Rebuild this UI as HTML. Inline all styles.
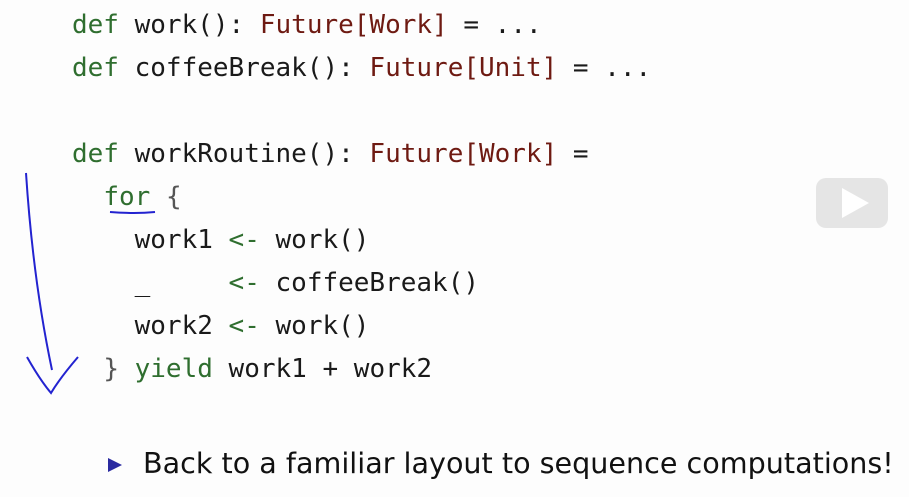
<!DOCTYPE html>
<html><head><style>
body{margin:0;width:909px;height:497px;background:#fdfdfd;overflow:hidden;position:relative;font-family:"DejaVu Sans Mono","Liberation Mono",monospace;}
.c{position:absolute;left:72px;top:4px;font-size:26px;line-height:43px;white-space:pre;color:#1a1a1a;}
.k{color:#2f6e2f}.t{color:#6e1a12}.g{color:#555}
.b{position:absolute;left:143px;top:446px;font-family:"DejaVu Sans","Liberation Sans",sans-serif;font-size:28.6px;color:#111;white-space:nowrap}
</style></head><body>
<div class="c"><span class="k">def</span> work(): <span class="t">Future[Work]</span> = ...
<span class="k">def</span> coffeeBreak(): <span class="t">Future[Unit]</span> = ...

<span class="k">def</span> workRoutine(): <span class="t">Future[Work]</span> =
  <span class="k">for</span> <span class="g">{</span>
    work1 <span class="k">&lt;-</span> work()
    _     <span class="k">&lt;-</span> coffeeBreak()
    work2 <span class="k">&lt;-</span> work()
  <span class="g">}</span> <span class="k">yield</span> work1 + work2</div>
<svg style="position:absolute;left:0;top:0" width="909" height="497">
<path d="M26 173 Q33 280 52 370" stroke="#2323d0" stroke-width="2" fill="none"/>
<path d="M27 357 Q40 380 51 393 Q60 378 78 357" stroke="#2323d0" stroke-width="2" fill="none"/>
<path d="M110 212 Q135 214 155 212" stroke="#2323d0" stroke-width="2" fill="none"/>
<rect x="816" y="178" width="72" height="50" rx="10" fill="#e5e5e5"/>
<path d="M842 188 L869 203 L842 218 Z" fill="#fff"/>
<path d="M108 458 L122 465 L108 472 Z" fill="#2a2aa0"/>
</svg>
<div class="b">Back to a familiar layout to sequence computations!</div>
</body></html>
